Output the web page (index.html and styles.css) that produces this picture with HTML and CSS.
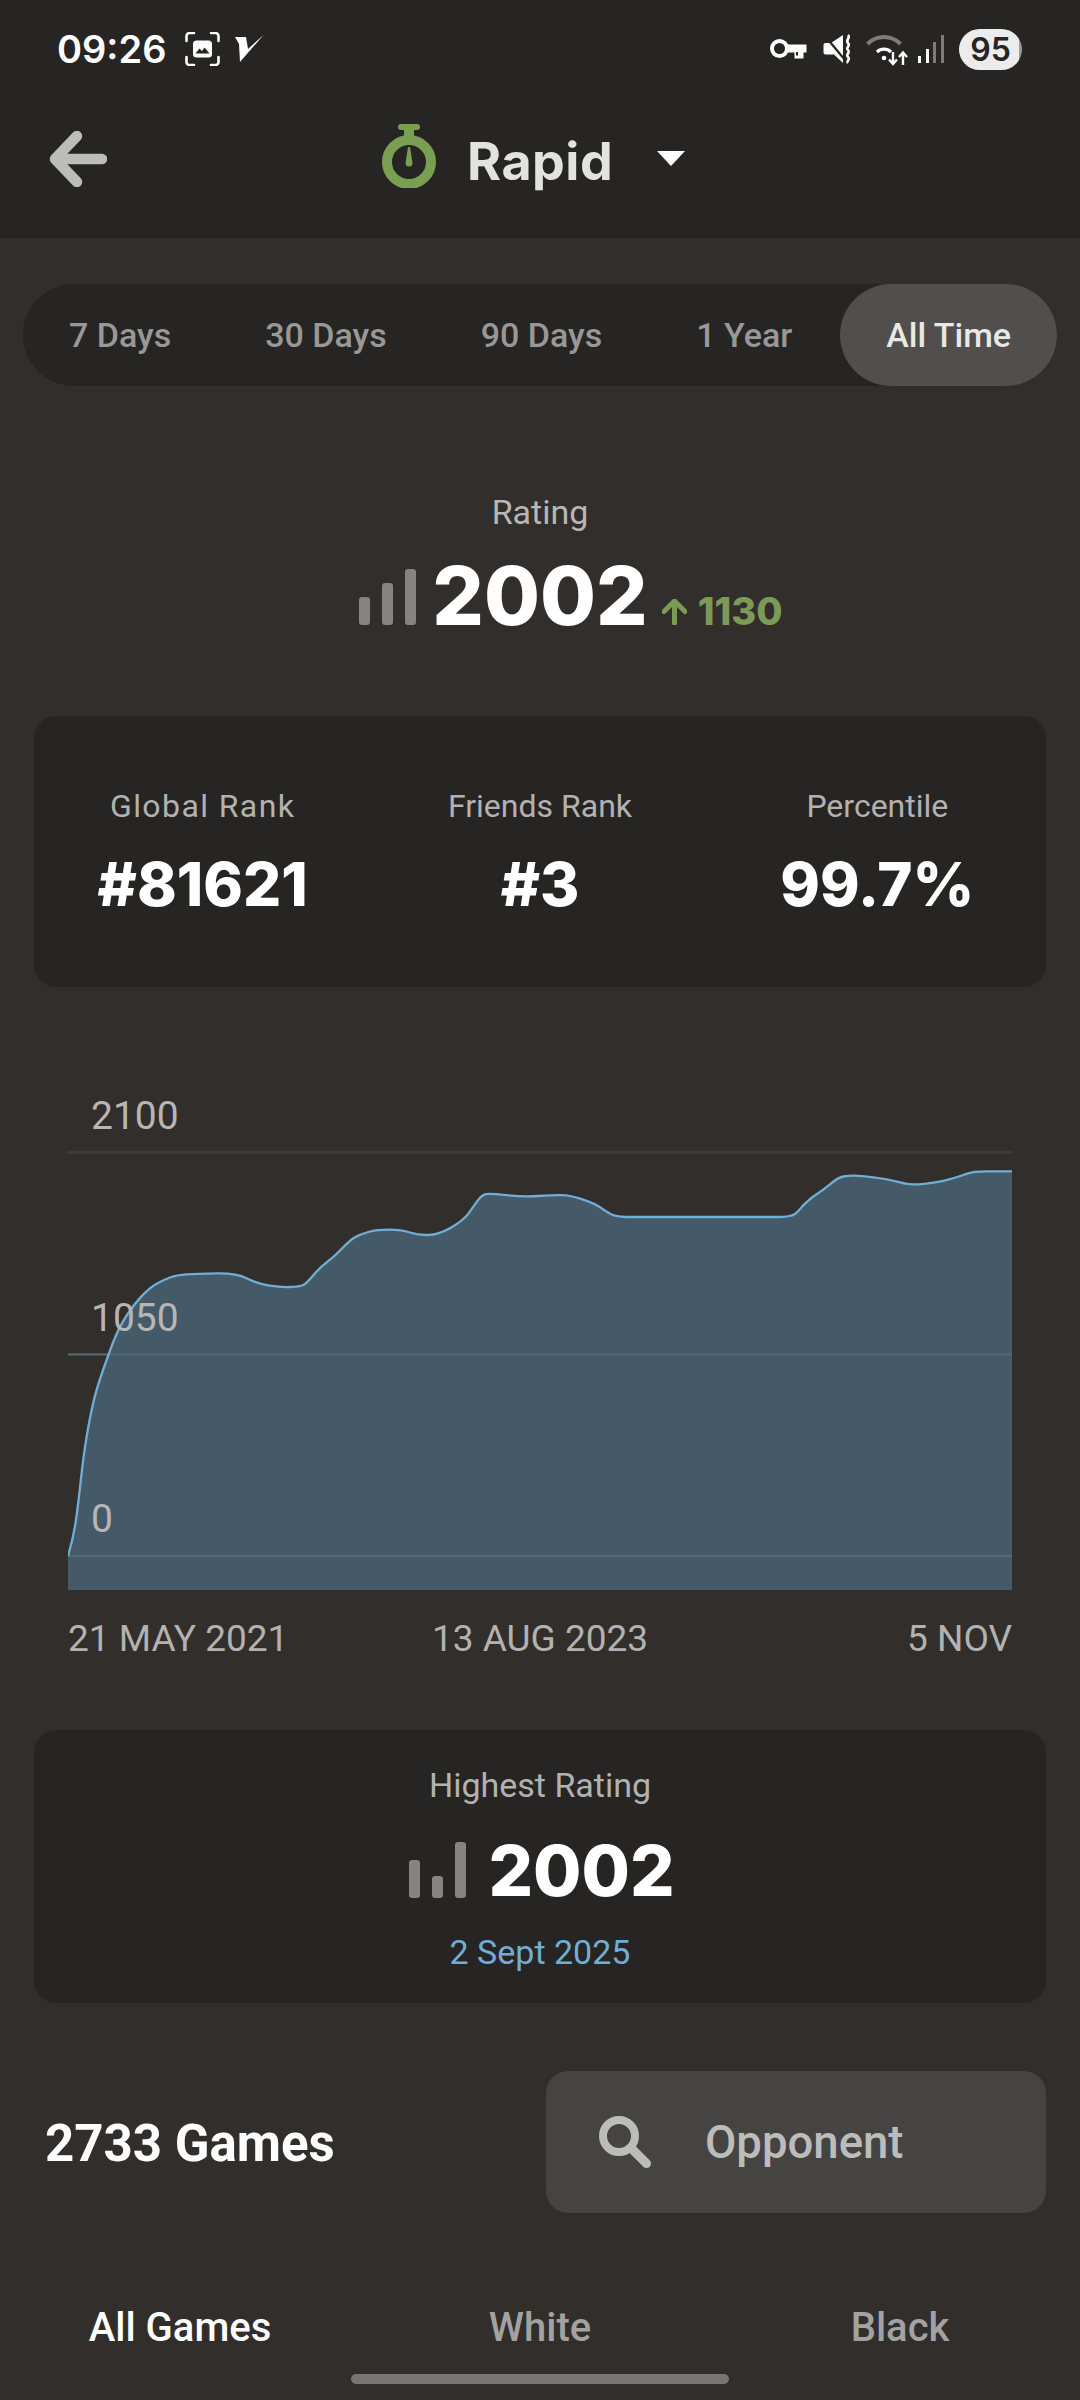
FILE: index.html
```html
<!DOCTYPE html>
<html lang="en">
<head>
  <meta charset="UTF-8" />
  <meta name="viewport" content="width=device-width, initial-scale=1.0" />
  <title>Rapid Stats</title>
  <link rel="stylesheet" href="styles.css">
</head>
<body>
  <header class="top">
    <div class="status">
      <span class="clock">09:26</span>
      <svg class="ico-shot" width="35" height="34" viewBox="0 0 35 34">
        <path d="M1.500 9V4a3 3 0 0 1 3-3H9M26 1h4.500a3 3 0 0 1 3 3v5M33.500 25v5a3 3 0 0 1-3 3H26M9 33H4.500a3 3 0 0 1-3-3v-5" fill="none" stroke="#fff" stroke-width="2.600" stroke-linecap="round"/>
        <rect x="8" y="8.500" width="19" height="17" rx="3.500" fill="#fff"/>
        <path d="M10.500 21.500l4-5 2.500 2.500 2.500-3.500 5 6z" fill="#262523"/>
      </svg>
      <svg class="ico-v" width="29" height="28" viewBox="0 0 29 28">
        <path d="M0 2h11l2 12L28.500 0 5 27 4 9z" fill="#fff"/>
      </svg>
      <div class="status-right">
        <svg class="ico-key" width="37" height="22" viewBox="0 0 37 22">
          <circle cx="9.500" cy="10.500" r="7.500" fill="none" stroke="#fff" stroke-width="4"/>
          <path d="M16 6.500h20.500v8h-3v6h-9v-6H16z" fill="#fff"/>
          <path d="M28 14v3.500h-2V14z" fill="#262523"/>
        </svg>
        <svg class="ico-mute" width="29" height="30" viewBox="0 0 29 30">
          <path d="M20 1v28l-9-8.500H2.500A2 2 0 0 1 .5 18.500V11a2 2 0 0 1 2-2H8z" fill="#fff"/>
          <path d="M2 2l20 24" stroke="#262523" stroke-width="2.200"/>
          <path d="M25 1c3 3-3 5 0 8s-3 5 0 7-3 5 0 7-2 4 0 6" fill="none" stroke="#fff" stroke-width="2.600"/>
        </svg>
        <svg class="ico-wifi" width="42" height="34" viewBox="0 0 42 34">
          <path d="M1.500 12A23 23 0 0 1 34.500 12" fill="none" stroke="#7d7c7b" stroke-width="4"/>
          <path d="M11 20A10 10 0 0 1 25 20" fill="none" stroke="#fff" stroke-width="3.200"/>
          <circle cx="18" cy="26" r="2.300" fill="#fff"/>
          <path d="M27 20v12M23 27.500l4 4.500 4-4.500M37 33V21M33 25l4-4.500 4 4.500" fill="none" stroke="#fff" stroke-width="2.400"/>
        </svg>
        <svg class="ico-signal" width="27" height="30" viewBox="0 0 27 30">
          <rect x="0" y="22" width="3" height="7" fill="#fff"/>
          <rect x="8" y="15" width="3" height="14" fill="#fff"/>
          <rect x="15" y="8" width="3" height="21" fill="#7d7c7b"/>
          <rect x="23" y="1" width="3" height="28" fill="#7d7c7b"/>
        </svg>
        <span class="battery">95</span>
      </div>
    </div>
    <div class="titlebar">
      <svg class="ico-back" width="58" height="56" viewBox="0 0 58 56">
        <path d="M28 5L6 28l22 23M8 28h45" fill="none" stroke="#bcbcbb" stroke-width="10.500" stroke-linecap="round" stroke-linejoin="round"/>
      </svg>
      <svg class="ico-watch" width="54" height="64" viewBox="0 0 54 64">
        <path d="M19 0h16a3 3 0 0 1 0 6h-3v8H22V6h-3a3 3 0 0 1 0-6z" fill="#7b9f50"/>
        <circle cx="27" cy="38" r="22" fill="none" stroke="#7b9f50" stroke-width="10"/>
        <path d="M26 23h2l2.500 16a3.500 3.500 0 0 1-7 0z" fill="#7b9f50"/>
      </svg>
      <span class="title">Rapid</span>
      <span class="caret"></span>
    </div>
  </header>

  <div class="range">
    <span class="range-item">7 Days</span>
    <span class="range-item">30 Days</span>
    <span class="range-item">90 Days</span>
    <span class="range-item">1 Year</span>
    <span class="range-item active">All Time</span>
  </div>

  <div class="rating-label">Rating</div>
  <div class="rating-row">
    <div class="bars up">
      <i class="b1"></i><i class="b2"></i><i class="b3"></i>
    </div>
    <span class="rating-num">2002</span>
    <div class="gain">
      <svg width="25" height="26" viewBox="0 0 25 26">
        <path d="M12.500 24V3M2 12.500L12.500 2 23 12.500" fill="none" stroke="#7b9a58" stroke-width="5" stroke-linecap="round" stroke-linejoin="round"/>
      </svg>
      <span>1130</span>
    </div>
  </div>

  <div class="card ranks">
    <div class="rank">
      <div class="card-label wide">Global Rank</div>
      <div class="rank-num">#81621</div>
    </div>
    <div class="rank">
      <div class="card-label">Friends Rank</div>
      <div class="rank-num">#3</div>
    </div>
    <div class="rank">
      <div class="card-label">Percentile</div>
      <div class="rank-num">99.7%</div>
    </div>
  </div>

  <div class="chart">
    <svg width="944" height="510" viewBox="84 0 2832 1530">
      <line class="grid-line" x1="84" y1="217" x2="2916" y2="217"/>
      <path class="area" d="M84 1428Q100 1375 107.500 1322.500Q115 1270 122.500 1200Q130 1130 140 1070Q150 1010 160 967.500Q170 925 187.500 875Q205 825 220 785Q235 745 257.500 710Q280 675 305 648.500Q330 622 350 611Q370 600 390 592.500Q410 585 440 583Q470 581 530 580Q590 579 620 594.500Q650 610 685 616Q720 622 750 621Q780 620 790 615Q800 610 820 586Q840 562 862.500 545Q885 528 907.500 504Q930 480 945 471.500Q960 463 985 456Q1010 449 1047.500 449Q1085 449 1110 457.500Q1135 466 1165 465Q1195 464 1232.500 443Q1270 422 1285 401Q1300 380 1312.500 362.500Q1325 345 1337.500 342.500Q1350 340 1400 345.500Q1450 351 1495 348Q1540 345 1565 345.500Q1590 346 1627.500 358Q1665 370 1687.500 386.500Q1710 403 1725 407Q1740 411 1760 411L2215 411Q2250 411 2265 402Q2275 395 2287.500 378.500Q2310 355 2330 342.500Q2350 330 2372.500 311Q2395 292 2410 289.500Q2425 287 2442.500 287Q2460 287 2500 292Q2540 297 2567.500 304Q2595 311 2610 312.500Q2625 314 2652.500 311.500Q2680 309 2710 302.500Q2740 296 2765 286.500Q2790 277 2805 275.500Q2820 274 2840 274L2916 274L2916 1530L84 1530Z"/>
      <line class="grid-line on-area" x1="84" y1="823" x2="2916" y2="823"/>
      <line class="grid-line on-area" x1="84" y1="1428" x2="2916" y2="1428"/>
      <path class="curve" d="M84 1428Q100 1375 107.500 1322.500Q115 1270 122.500 1200Q130 1130 140 1070Q150 1010 160 967.500Q170 925 187.500 875Q205 825 220 785Q235 745 257.500 710Q280 675 305 648.500Q330 622 350 611Q370 600 390 592.500Q410 585 440 583Q470 581 530 580Q590 579 620 594.500Q650 610 685 616Q720 622 750 621Q780 620 790 615Q800 610 820 586Q840 562 862.500 545Q885 528 907.500 504Q930 480 945 471.500Q960 463 985 456Q1010 449 1047.500 449Q1085 449 1110 457.500Q1135 466 1165 465Q1195 464 1232.500 443Q1270 422 1285 401Q1300 380 1312.500 362.500Q1325 345 1337.500 342.500Q1350 340 1400 345.500Q1450 351 1495 348Q1540 345 1565 345.500Q1590 346 1627.500 358Q1665 370 1687.500 386.500Q1710 403 1725 407Q1740 411 1760 411L2215 411Q2250 411 2265 402Q2275 395 2287.500 378.500Q2310 355 2330 342.500Q2350 330 2372.500 311Q2395 292 2410 289.500Q2425 287 2442.500 287Q2460 287 2500 292Q2540 297 2567.500 304Q2595 311 2610 312.500Q2625 314 2652.500 311.500Q2680 309 2710 302.500Q2740 296 2765 286.500Q2790 277 2805 275.500Q2820 274 2840 274L2916 274"/>
    </svg>
    <span class="axis axis-top">2100</span>
    <span class="axis axis-mid">1050</span>
    <span class="axis axis-low">0</span>
  </div>

  <div class="dates">
    <span>21 MAY 2021</span>
    <span>13 AUG 2023</span>
    <span class="date-end">5 NOV</span>
  </div>

  <div class="card highest">
    <div class="card-label">Highest Rating</div>
    <div class="highest-row">
      <div class="bars">
        <i class="h1"></i><i class="h2"></i><i class="h3"></i>
      </div>
      <span class="highest-num">2002</span>
    </div>
    <div class="highest-date">2 Sept 2025</div>
  </div>

  <div class="games-row">
    <span class="games">2733 Games</span>
    <div class="search">
      <svg width="52" height="52" viewBox="0 0 52 52">
        <circle cx="20" cy="20" r="16" fill="none" stroke="#bcbcbb" stroke-width="8"/>
        <path d="M32 32l15.500 15.500" stroke="#bcbcbb" stroke-width="9" stroke-linecap="round"/>
      </svg>
      <span>Opponent</span>
    </div>
  </div>

  <div class="colors">
    <span class="active">All Games</span>
    <span>White</span>
    <span>Black</span>
  </div>

  <div class="home-bar"></div>
</body>
</html>
```

FILE: styles.css
```css
body {
  font-family: Roboto, sans-serif;
  background-color: #312e2b;
  color: #fff;
  margin: 0;
  width: 1080px;
  height: 2400px;
  overflow: hidden;
}

/* top bar */
.top {
  background: #262523;
  height: 238px;
}
.status {
  display: flex;
  align-items: center;
  height: 98px;
  padding-left: 57px;
  padding-right: 58px;
}
.clock {
  font-family: Inter, sans-serif;
  font-size: 38px;
  font-weight: 600;
  line-height: 98px;
}
.ico-shot {
  margin-left: 19px;
}
.ico-v {
  margin-left: 15px;
}
.status-right {
  display: flex;
  align-items: center;
  margin-left: auto;
}
.ico-mute {
  margin-left: 16px;
}
.ico-wifi {
  margin-left: 14px;
}
.ico-signal {
  margin-left: 10px;
}
.battery {
  font-family: Inter, sans-serif;
  font-size: 32px;
  font-weight: 600;
  line-height: 41px;
  width: 63px;
  margin-left: 14px;
  text-align: center;
  color: #262523;
  border-radius: 21px;
  background: linear-gradient(to right, #ececec 95%, #9a9a9a 95%);
}
.titlebar {
  display: flex;
  align-items: center;
  height: 118px;
  padding-left: 49px;
  padding-top: 4px;
  box-sizing: border-box;
}
.ico-back {
  display: block;
}
.ico-watch {
  margin-left: 275px;
  margin-top: -6px;
}
.title {
  font-family: Inter, sans-serif;
  font-size: 52px;
  font-weight: 700;
  letter-spacing: 0.5px;
  color: #e2e2e1;
  margin-left: 31px;
  margin-top: 4px;
}
.caret {
  width: 0;
  height: 0;
  border-left: 14px solid transparent;
  border-right: 14px solid transparent;
  border-top: 15px solid #fff;
  margin-left: 44px;
  margin-top: -2px;
}

/* range switch */
.range {
  display: flex;
  justify-content: space-between;
  margin: 46px 23px 0;
  height: 102px;
  border-radius: 51px;
  background: #262523;
}
.range-item {
  padding: 0 46px;
  line-height: 102px;
  font-size: 34px;
  font-weight: 500;
  white-space: nowrap;
  color: #999897;
}
.range-item.active {
  background: #504f4d;
  border-radius: 51px;
  color: #e8e8e7;
}

/* rating */
.rating-label {
  margin-top: 106px;
  text-align: center;
  font-size: 34px;
  line-height: 40px;
  color: #b8b7b6;
}
.rating-row {
  display: grid;
  grid-template-columns: 1fr auto 1fr;
  align-items: baseline;
  column-gap: 18px;
  margin-top: 24px;
  height: 80px;
}
.bars {
  display: flex;
  align-items: flex-end;
  gap: 12px;
}
.bars i {
  display: block;
  width: 11px;
  border-radius: 3px;
  background: #858483;
}
.bars.up {
  justify-content: flex-end;
  margin-right: -2px;
}
.b1 {
  height: 28px;
}
.b2 {
  height: 42px;
}
.b3 {
  height: 56px;
}
.rating-num {
  font-family: Inter, sans-serif;
  font-size: 81px;
  font-weight: 800;
  line-height: 80px;
}
.gain {
  display: flex;
  align-items: baseline;
  gap: 11px;
  margin-left: -4px;
  font-family: Inter, sans-serif;
  font-size: 38px;
  font-weight: 800;
  color: #7b9a58;
}

/* cards */
.card {
  margin: 0 34px;
  background: #262523;
  border-radius: 22px;
}
.ranks {
  display: grid;
  grid-template-columns: 1fr 1fr 1fr;
  margin-top: 80px;
  height: 271px;
  text-align: center;
}
.rank {
  padding-top: 70px;
}
.card-label {
  font-size: 32px;
  line-height: 40px;
  color: #b3b2b1;
}
.card-label.wide {
  letter-spacing: 1.4px;
}
.rank-num {
  margin-top: 23px;
  font-family: Inter, sans-serif;
  font-size: 60px;
  font-weight: 800;
  line-height: 70px;
}

/* chart */
.chart {
  position: relative;
  margin: 93px 0 0 68px;
  width: 944px;
  height: 510px;
}
.chart svg {
  display: block;
}
.area {
  fill: #445a68;
}
.curve {
  fill: none;
  stroke: #70aed6;
  stroke-width: 7;
}
.grid-line {
  stroke: #403e3b;
  stroke-width: 7;
}
.grid-line.on-area {
  stroke: #546873;
}
.axis {
  position: absolute;
  left: 23px;
  font-size: 39px;
  line-height: 44px;
  color: #b8b6b4;
}
.axis-top {
  top: 14px;
}
.axis-mid {
  top: 216px;
}
.axis-low {
  top: 417px;
}
.dates {
  display: grid;
  grid-template-columns: 1fr auto 1fr;
  margin: 27px 68px 0;
  font-size: 37px;
  line-height: 43px;
  color: #b3b2b1;
}
.date-end {
  text-align: right;
}

/* highest */
.highest {
  margin-top: 70px;
  height: 273px;
  padding-top: 35px;
  box-sizing: border-box;
  text-align: center;
}
.highest .card-label {
  font-size: 34px;
}
.highest-row {
  display: flex;
  justify-content: center;
  align-items: baseline;
  gap: 22px;
  margin-top: 31px;
  height: 70px;
  padding-left: 4px;
}
.h1 {
  height: 38px;
}
.h2 {
  height: 22px;
}
.h3 {
  height: 56px;
}
.highest .bars {
  transform: translateY(2px);
}
.highest-num {
  font-family: Inter, sans-serif;
  font-size: 70px;
  font-weight: 800;
  line-height: 70px;
}
.highest-date {
  margin-top: 26px;
  font-size: 34px;
  line-height: 40px;
  color: #70aed6;
}

/* games row */
.games-row {
  display: flex;
  justify-content: space-between;
  align-items: center;
  margin: 68px 34px 0 45px;
}
.games {
  font-size: 51px;
  font-weight: 700;
  margin-top: 2px;
}
.search {
  display: flex;
  align-items: center;
  gap: 54px;
  width: 500px;
  height: 142px;
  padding-left: 53px;
  box-sizing: border-box;
  border-radius: 22px;
  background: #454442;
  font-size: 45.5px;
  font-weight: 500;
  color: #bcbcbb;
}

/* bottom tabs */
.colors {
  display: grid;
  grid-template-columns: 1fr 1fr 1fr;
  margin-top: 90px;
  text-align: center;
  font-size: 40px;
  font-weight: 500;
  line-height: 50px;
  color: #a3a2a1;
}
.colors .active {
  color: #fff;
}
.home-bar {
  margin: 21px auto 0;
  width: 378px;
  height: 10px;
  border-radius: 5px;
  background: #777675;
}
```
